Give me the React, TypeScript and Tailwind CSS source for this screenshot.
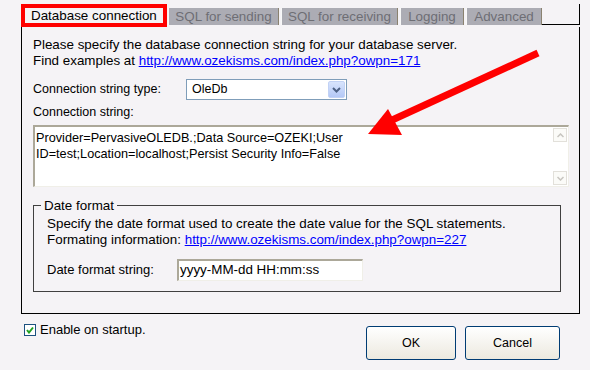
import React from 'react';

const tabs = [
  { label: 'SQL for sending', w: 'w-[111px] ml-[1px]' },
  { label: 'SQL for receiving', w: 'w-[117px] ml-[2px]' },
  { label: 'Logging', w: 'w-[64px] ml-[2px]' },
  { label: 'Advanced', w: 'w-[76px] ml-[2px]' },
];

const App = () => {
  return (
    <div className="relative w-[590px] h-[370px] overflow-hidden bg-[#f5f3f6] text-[13.4px] text-black font-['Liberation_Sans',Arial,sans-serif]">
      <div className="pt-[4px] pl-[21px]">
        {/* tab strip */}
        <div className="flex w-[559px] h-[23px]">
          <div className="shrink-0 w-[146px] h-[23px] border-[4px] border-[#ff0000] bg-[#f5f3f6] flex items-center pl-[6px] leading-none">
            Database connection
          </div>
          {tabs.map((t) => (
            <div
              key={t.label}
              className={`${t.w} shrink-0 self-start mt-[4px] h-[17px] bg-[#acacb4] border-l border-l-[#f8f8f8] border-r border-r-[#8a8270] text-[#6e6e74] flex items-center justify-center leading-none`}
            >
              {t.label}
            </div>
          ))}
          <div className="flex-1 self-start h-[21px] border-b border-r border-black"></div>
        </div>

        {/* panel */}
        <div className="w-[559px] h-[287px] border-l border-r border-b border-black pl-[11px] pt-[10px]">
          <p className="leading-[16px]">Please specify the database connection string for your database server.</p>
          <p className="leading-[16px]">
            Find examples at <span className="text-[#0000ff] underline">http://www.ozekisms.com/index.php?owpn=171</span>
          </p>

          <div className="flex items-center mt-[10px] h-[21px]">
            <span className="w-[153px] text-[12.5px]">Connection string type:</span>
            <div className="w-[161px] h-[21px] border border-[#7f9db9] bg-white flex items-center pl-[5px] text-[12.5px]">
              <span className="flex-1">OleDb</span>
              <div className="w-[17px] h-[17px] mr-[1px] rounded-[2px] bg-gradient-to-b from-[#d8e4fd] to-[#b4c8f6] border border-[#c2d2f5] flex items-center justify-center">
                <svg width="9" height="6" viewBox="0 0 9 6">
                  <path d="M1 1 L4.5 4.5 L8 1" fill="none" stroke="#4d6185" strokeWidth="2" />
                </svg>
              </div>
            </div>
          </div>

          <p className="mt-[4px] text-[12.5px] leading-[16px]">Connection string:</p>

          <div className="mt-[5px] w-[536px] h-[62px] bg-white border-t-2 border-l-2 border-t-[#aca899] border-l-[#aca899] border-r border-b border-r-[#f0efe8] border-b-[#f0efe8] flex text-[12.7px] leading-[16px]">
            <div className="flex-1 pl-[1px] pt-[3px]">
              Provider=PervasiveOLEDB.;Data Source=OZEKI;User
              <br />
              ID=test;Location=localhost;Persist Security Info=False
            </div>
            <div className="w-[14px] my-[1px] mr-[1px] flex flex-col justify-between">
              <div className="h-[14px] border border-[#e2e0da] bg-[#fbfbf8] flex items-center justify-center">
                <svg width="7" height="5" viewBox="0 0 7 5">
                  <path d="M0.5 4 L3.5 1 L6.5 4" fill="none" stroke="#c7c5bf" strokeWidth="1.5" />
                </svg>
              </div>
              <div className="h-[14px] border border-[#e2e0da] bg-[#fbfbf8] flex items-center justify-center">
                <svg width="7" height="5" viewBox="0 0 7 5">
                  <path d="M0.5 1 L3.5 4 L6.5 1" fill="none" stroke="#c7c5bf" strokeWidth="1.5" />
                </svg>
              </div>
            </div>
          </div>

          {/* date format group */}
          <div className="relative mt-[18px] w-[528px] h-[87px] border border-[#404040] pl-[13px] pt-[10px]">
            <span className="absolute -top-[8px] left-[7px] px-[3px] bg-[#f5f3f6] leading-[16px]">Date format</span>
            <p className="leading-[16px]">Specify the date format used to create the date value for the SQL statements.</p>
            <p className="leading-[16px]">
              Formating information: <span className="text-[#0000ff] underline">http://www.ozekisms.com/index.php?owpn=227</span>
            </p>
            <div className="flex items-center mt-[11px]">
              <span className="w-[130px] text-[13px]">Date format string:</span>
              <div className="w-[186px] h-[22px] bg-white border-t-2 border-l-2 border-t-[#aca899] border-l-[#aca899] border-r border-b border-r-[#f0efe8] border-b-[#f0efe8] flex items-center pl-[1px]">
                yyyy-MM-dd HH:mm:ss
              </div>
            </div>
          </div>
        </div>

        {/* bottom row */}
        <div className="flex items-start w-[539px] pt-[6px] pl-[3px]">
          <div className="flex items-center flex-1">
            <div className="w-[12px] h-[12px] border border-[#1c5180] bg-white flex items-center justify-center">
              <svg width="8" height="8" viewBox="0 0 8 8">
                <path d="M1 4 L3 6.5 L7 1.5" fill="none" stroke="#21a121" strokeWidth="2" />
              </svg>
            </div>
            <span className="ml-[4px] text-[13px]">Enable on startup.</span>
          </div>
          <button className="mt-[6px] w-[90px] h-[34px] rounded-[3px] border border-[#003c74] bg-gradient-to-b from-white to-[#ece9df] text-[12.5px]">
            OK
          </button>
          <button className="mt-[6px] ml-[9px] w-[95px] h-[34px] rounded-[3px] border border-[#003c74] bg-gradient-to-b from-white to-[#ece9df] text-[12.5px]">
            Cancel
          </button>
        </div>
      </div>

      {/* annotation arrow */}
      <svg className="absolute left-0 top-0 pointer-events-none" width="590" height="370" viewBox="0 0 590 370">
        <line x1="538" y1="53" x2="390" y2="121" stroke="#ff0000" strokeWidth="7" />
        <polygon points="368,134 388,109 402,135" fill="#ff0000" />
      </svg>
    </div>
  );
};

export default App;
